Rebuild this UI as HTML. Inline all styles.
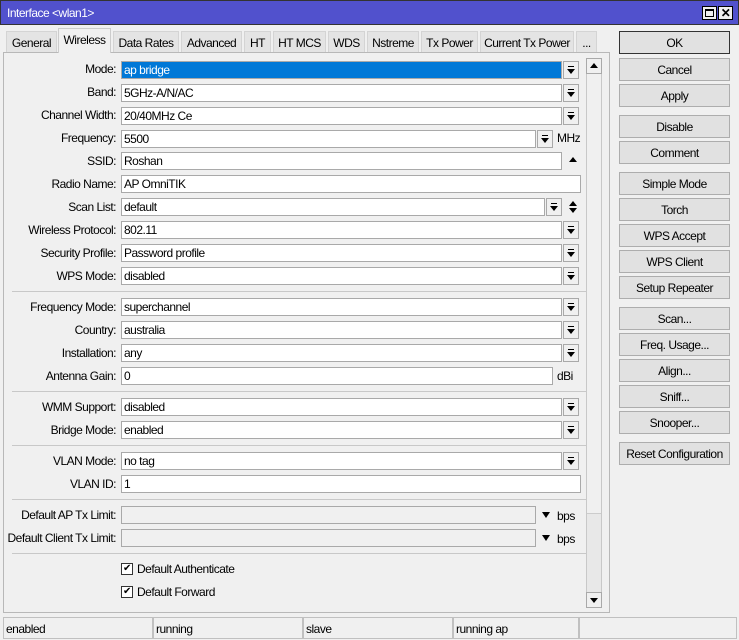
<!DOCTYPE html>
<html><head><meta charset="utf-8"><style>
*{box-sizing:border-box}
body{margin:0;width:739px;height:640px;background:#f0f0f0;font-family:"Liberation Sans",sans-serif;font-size:12px;color:#000;position:relative;overflow:hidden;letter-spacing:-0.5px}
.a{position:absolute}
.title{left:0;top:0;width:739px;height:25px;background:#5151cd;border:1px solid #333;color:#fff;padding:5px 0 0 6px}
.tb{top:6px;width:15px;height:14px;background:#f0f0f0;border:1px solid #000}
.tab{top:31px;height:21px;background:#e4e4e4;border:1px solid #d4d4d4;border-bottom:none;text-align:center;padding-top:4px}
.tab.act{top:28px;height:25px;background:#f0f0f0;border-color:#ccc;padding-top:4px;z-index:2}
.panel{left:3px;top:52px;width:607px;height:561px;border:1px solid #b8b8b8;background:#f0f0f0}
.lbl{width:116px;text-align:right}
.f{height:18px;background:#fff;border:1px solid #a9a9a9;padding:1px 0 0 2px}
.g{background:#f0f0f0}
.dd{width:16px;height:18px;border:1px solid #a9a9a9;background:#f0f0f0}
.dd::before{content:"";position:absolute;left:4px;top:4px;width:6px;height:0;border-top:1px solid #000}
.dd::after{content:"";position:absolute;left:3px;top:7px;border-left:4px solid transparent;border-right:4px solid transparent;border-top:5px solid #000}
.sep{left:12px;width:575px;height:1px;background:#c8c8c8}
.btn{left:619px;width:111px;height:23px;background:#e1e1e1;border:1px solid #adadad;text-align:center;padding-top:4px}
.sb{top:617px;height:22px;border:1px solid #c0c0c0;padding:4px 0 0 2px;background:#f0f0f0}
.cb{width:12px;height:12px;border:1px solid #333;background:#fff;font-size:10px;line-height:10px;text-align:center}
.tri{width:0;height:0;border-left:4px solid transparent;border-right:4px solid transparent}
</style></head><body>
<div class="a title">Interface &lt;wlan1&gt;</div>
<div class="a tb" style="left:702px"><div style="margin:2px;border:1px solid #000;border-top-width:2px;width:9px;height:8px"></div></div>
<div class="a tb" style="left:718px;font-size:12px;font-weight:bold;text-align:center;line-height:12px">✕</div>

<div class="a tab" style="left:6px;width:51px">General</div>
<div class="a tab act" style="left:58px;width:53px">Wireless</div>
<div class="a tab" style="left:113px;width:66px">Data Rates</div>
<div class="a tab" style="left:181px;width:61px">Advanced</div>
<div class="a tab" style="left:244px;width:27px">HT</div>
<div class="a tab" style="left:273px;width:53px">HT MCS</div>
<div class="a tab" style="left:328px;width:37px">WDS</div>
<div class="a tab" style="left:367px;width:52px">Nstreme</div>
<div class="a tab" style="left:421px;width:57px">Tx Power</div>
<div class="a tab" style="left:480px;width:94px">Current Tx Power</div>
<div class="a tab" style="left:576px;width:21px">...</div>

<div class="a panel"></div>
<div class="a" style="left:586px;top:58px;width:16px;height:550px;background:#e8e8e8;border:1px solid #c8c8c8"></div>
<div class="a" style="left:587px;top:74px;width:14px;height:440px;background:#f0f0f0;border-bottom:1px solid #ccc"></div>
<div class="a" style="left:586px;top:58px;width:16px;height:16px;border:1px solid #a9a9a9;background:#f0f0f0"><div class="a tri" style="left:3px;top:4px;border-bottom:5px solid #000"></div></div>
<div class="a" style="left:586px;top:592px;width:16px;height:16px;border:1px solid #a9a9a9;background:#f0f0f0"><div class="a tri" style="left:3px;top:5px;border-top:5px solid #000"></div></div>

<div class="a lbl" style="left:0;top:62px">Mode:</div>
<div class="a f" style="left:121px;top:61px;width:441px;background:#0078d7;color:#fff">ap bridge</div>
<div class="a dd" style="left:563px;top:61px"></div>

<div class="a lbl" style="left:0;top:85px">Band:</div>
<div class="a f" style="left:121px;top:84px;width:441px">5GHz-A/N/AC</div>
<div class="a dd" style="left:563px;top:84px"></div>

<div class="a lbl" style="left:0;top:108px">Channel Width:</div>
<div class="a f" style="left:121px;top:107px;width:441px">20/40MHz Ce</div>
<div class="a dd" style="left:563px;top:107px"></div>

<div class="a lbl" style="left:0;top:131px">Frequency:</div>
<div class="a f" style="left:121px;top:130px;width:415px">5500</div>
<div class="a dd" style="left:537px;top:130px"></div>
<div class="a" style="left:557px;top:131px">MHz</div>

<div class="a lbl" style="left:0;top:154px">SSID:</div>
<div class="a f" style="left:121px;top:152px;width:441px">Roshan</div>
<div class="a tri" style="left:569px;top:157px;border-bottom:5px solid #000"></div>

<div class="a lbl" style="left:0;top:177px">Radio Name:</div>
<div class="a f" style="left:121px;top:175px;width:460px">AP OmniTIK</div>

<div class="a lbl" style="left:0;top:200px">Scan List:</div>
<div class="a f" style="left:121px;top:198px;width:424px">default</div>
<div class="a dd" style="left:546px;top:198px"></div>
<div class="a tri" style="left:569px;top:201px;border-bottom:5px solid #000"></div>
<div class="a tri" style="left:569px;top:208px;border-top:5px solid #000"></div>

<div class="a lbl" style="left:0;top:223px">Wireless Protocol:</div>
<div class="a f" style="left:121px;top:221px;width:441px">802.11</div>
<div class="a dd" style="left:563px;top:221px"></div>

<div class="a lbl" style="left:0;top:246px">Security Profile:</div>
<div class="a f" style="left:121px;top:244px;width:441px">Password profile</div>
<div class="a dd" style="left:563px;top:244px"></div>

<div class="a lbl" style="left:0;top:269px">WPS Mode:</div>
<div class="a f" style="left:121px;top:267px;width:441px">disabled</div>
<div class="a dd" style="left:563px;top:267px"></div>

<div class="a sep" style="top:291px"></div>

<div class="a lbl" style="left:0;top:300px">Frequency Mode:</div>
<div class="a f" style="left:121px;top:298px;width:441px">superchannel</div>
<div class="a dd" style="left:563px;top:298px"></div>

<div class="a lbl" style="left:0;top:323px">Country:</div>
<div class="a f" style="left:121px;top:321px;width:441px">australia</div>
<div class="a dd" style="left:563px;top:321px"></div>

<div class="a lbl" style="left:0;top:346px">Installation:</div>
<div class="a f" style="left:121px;top:344px;width:441px">any</div>
<div class="a dd" style="left:563px;top:344px"></div>

<div class="a lbl" style="left:0;top:369px">Antenna Gain:</div>
<div class="a f" style="left:121px;top:367px;width:432px">0</div>
<div class="a" style="left:557px;top:369px">dBi</div>

<div class="a sep" style="top:391px"></div>

<div class="a lbl" style="left:0;top:400px">WMM Support:</div>
<div class="a f" style="left:121px;top:398px;width:441px">disabled</div>
<div class="a dd" style="left:563px;top:398px"></div>

<div class="a lbl" style="left:0;top:423px">Bridge Mode:</div>
<div class="a f" style="left:121px;top:421px;width:441px">enabled</div>
<div class="a dd" style="left:563px;top:421px"></div>

<div class="a sep" style="top:445px"></div>

<div class="a lbl" style="left:0;top:454px">VLAN Mode:</div>
<div class="a f" style="left:121px;top:452px;width:441px">no tag</div>
<div class="a dd" style="left:563px;top:452px"></div>

<div class="a lbl" style="left:0;top:477px">VLAN ID:</div>
<div class="a f" style="left:121px;top:475px;width:460px">1</div>

<div class="a sep" style="top:499px"></div>

<div class="a lbl" style="left:0;top:508px">Default AP Tx Limit:</div>
<div class="a f g" style="left:121px;top:506px;width:415px"></div>
<div class="a tri" style="left:542px;top:512px;border-top:6px solid #000"></div>
<div class="a" style="left:557px;top:509px">bps</div>

<div class="a lbl" style="left:0;top:531px">Default Client Tx Limit:</div>
<div class="a f g" style="left:121px;top:529px;width:415px"></div>
<div class="a tri" style="left:542px;top:535px;border-top:6px solid #000"></div>
<div class="a" style="left:557px;top:532px">bps</div>

<div class="a sep" style="top:553px"></div>

<div class="a cb" style="left:121px;top:563px">✔</div>
<div class="a" style="left:137px;top:562px">Default Authenticate</div>
<div class="a cb" style="left:121px;top:586px">✔</div>
<div class="a" style="left:137px;top:585px">Default Forward</div>

<div class="a btn" style="top:31px;border-color:#333">OK</div>
<div class="a btn" style="top:58px">Cancel</div>
<div class="a btn" style="top:84px">Apply</div>
<div class="a btn" style="top:115px">Disable</div>
<div class="a btn" style="top:141px">Comment</div>
<div class="a btn" style="top:172px">Simple Mode</div>
<div class="a btn" style="top:198px">Torch</div>
<div class="a btn" style="top:224px">WPS Accept</div>
<div class="a btn" style="top:250px">WPS Client</div>
<div class="a btn" style="top:276px">Setup Repeater</div>
<div class="a btn" style="top:307px">Scan...</div>
<div class="a btn" style="top:333px">Freq. Usage...</div>
<div class="a btn" style="top:359px">Align...</div>
<div class="a btn" style="top:385px">Sniff...</div>
<div class="a btn" style="top:411px">Snooper...</div>
<div class="a btn" style="top:442px">Reset Configuration</div>

<div class="a sb" style="left:3px;width:150px">enabled</div>
<div class="a sb" style="left:153px;width:150px">running</div>
<div class="a sb" style="left:303px;width:150px">slave</div>
<div class="a sb" style="left:453px;width:126px">running ap</div>
<div class="a sb" style="left:579px;width:158px"></div>
</body></html>
